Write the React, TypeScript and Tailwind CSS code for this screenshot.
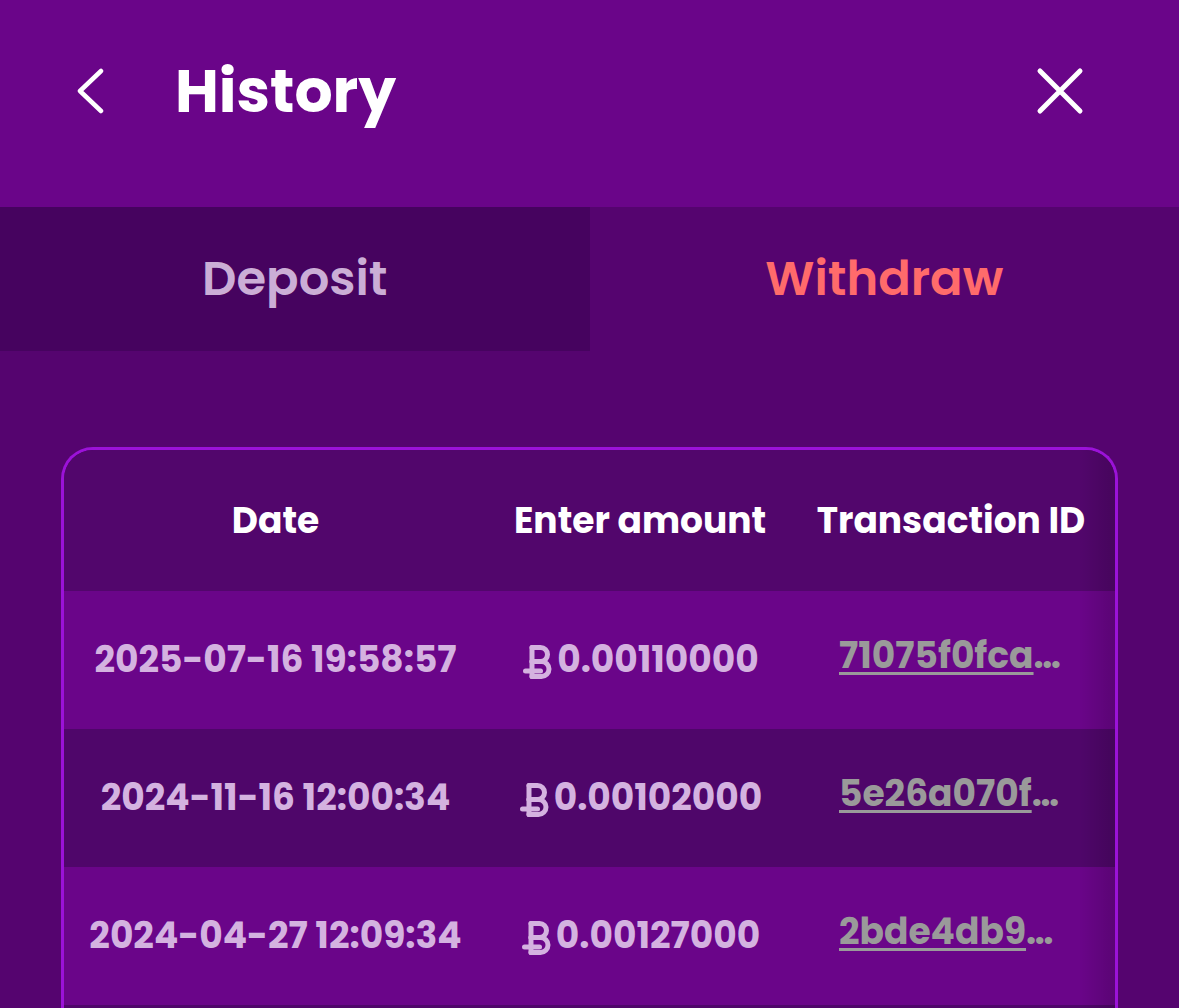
import React from 'react';

const rows = [
  { date: '2025-07-16 19:58:57', amount: '0.00110000', tx: '71075f0fca7e2b1c9d', dark: false },
  { date: '2024-11-16 12:00:34', amount: '0.00102000', tx: '5e26a070f4c1b88d2a', dark: true },
  { date: '2024-04-27 12:09:34', amount: '0.00127000', tx: '2bde4db9a61f03ce57', dark: false },
  { date: '2024-02-03 09:41:12', amount: '0.00098000', tx: '9fa1c03d7be25e64a1', dark: true },
];

const poppins = "font-['Poppins','Inter','Noto_Sans',sans-serif]";

function CoinIcon() {
  return (
    <svg width="32" height="36" viewBox="0 0 32 36" fill="none" stroke="#d4b2e0" strokeWidth="5" strokeLinecap="round" strokeLinejoin="round">
      <path d="M10 3.5v29" />
      <path d="M10 3.5h8.5a7 7 0 0 1 0 14H10" />
      <path d="M10 17.5h9.5a7.5 7.5 0 0 1 0 15H10" />
      <path d="M3.5 27h15" />
    </svg>
  );
}

export default function App() {
  return (
    <div className="w-[1179px] h-[1008px] overflow-hidden bg-[#55046f]">
      <header className="h-[207px] bg-[#6a0589] flex items-center px-[76px] pb-[26px]">
        <button className="w-[28px] h-[46px] flex items-center justify-center">
          <svg width="28" height="46" viewBox="0 0 28 46" fill="none" stroke="white" strokeWidth="4.5" strokeLinecap="round" strokeLinejoin="round">
            <path d="M25 3 4 23l21 20" />
          </svg>
        </button>
        <h1 className={`ml-[71px] text-white text-[60px] font-bold ${poppins} leading-none`}>History</h1>
        <button className="ml-auto mr-[19px] w-[48px] h-[48px] flex items-center justify-center">
          <svg width="48" height="48" viewBox="0 0 48 48" fill="none" stroke="white" strokeWidth="5" strokeLinecap="round">
            <path d="M4 4l40 40M44 4 4 44" />
          </svg>
        </button>
      </header>

      <div className={`grid grid-cols-2 h-[144px] ${poppins} font-semibold text-[48px]`}>
        <button className="bg-[#46035f] text-[#cbaed6] flex items-center justify-center">Deposit</button>
        <button className="bg-[#55046f] text-[#ff6b6b] flex items-center justify-center">Withdraw</button>
      </div>

      <div className="px-[61px] pt-[96px]">
        <div className={`relative rounded-t-[32px] border-[3px] border-b-0 border-[#9b12d8] overflow-hidden ${poppins} font-bold`}>
          <div className="grid grid-cols-[423px_300px_1fr] h-[141px] bg-[#52066c] text-white text-[36px] items-center text-center">
            <div>Date</div>
            <div className="pl-[6px]">Enter amount</div>
            <div>Transaction ID</div>
          </div>
          {rows.map((r, i) => (
            <div
              key={i}
              className={`grid grid-cols-[423px_300px_1fr] h-[138px] items-center text-center text-[36px] ${r.dark ? 'bg-[#4f066a]' : 'bg-[#6a0589]'}`}
            >
              <div className="text-[#d4b2e0]">{r.date}</div>
              <div className="flex items-center justify-center gap-[2px] pl-[6px] text-[#d4b2e0]">
                <span className="shrink-0 flex items-center justify-center w-[34px] h-[36px] mt-[4px]">
                  <CoinIcon />
                </span>
                <span>{r.amount}</span>
              </div>
              <div className="flex justify-start pl-[52px]">
                <a className="w-[224px] text-left truncate underline underline-offset-[4px] decoration-[3px] text-[#9a9a9a] pb-[8px]">
                  {r.tx}
                </a>
              </div>
            </div>
          ))}
          <div className="pointer-events-none absolute right-0 top-0 bottom-0 w-[36px] bg-gradient-to-r from-transparent to-black/15" />
        </div>
      </div>
    </div>
  );
}
